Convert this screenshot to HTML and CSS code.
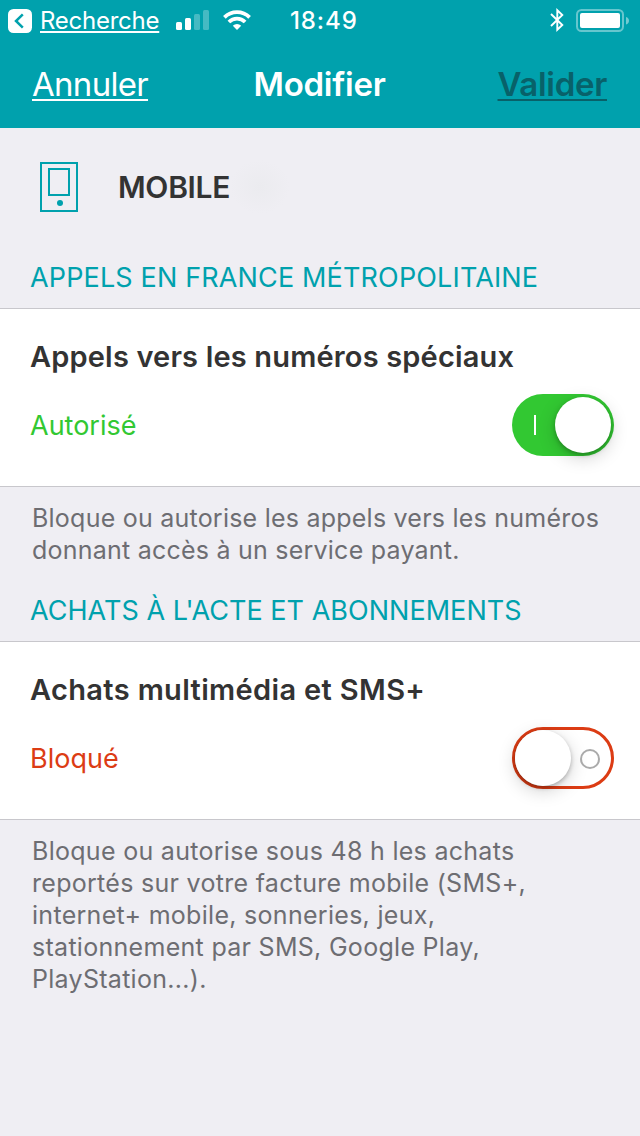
FILE: index.html
```html
<!DOCTYPE html>
<html lang="fr">
<head>
<meta charset="utf-8">
<title>Modifier</title>
<link rel="stylesheet" href="styles.css">
</head>
<body>
<header class="top">
  <div class="status">
    <svg class="back" width="24" height="24" viewBox="0 0 24 24"><rect width="24" height="24" rx="5.5" fill="#fff"/><path d="M14.8 5.3 8 12l6.8 6.7" fill="none" stroke="#00a1ad" stroke-width="2.5"/></svg>
    <span class="origin">Recherche</span>
    <svg class="signal" width="34" height="20" viewBox="0 0 34 20" fill="#fff"><rect y="12" width="6" height="8" rx="1.5"/><rect x="9" y="8" width="6" height="12" rx="1.5"/><rect x="18" y="4" width="6" height="16" rx="1.5" opacity=".27"/><rect x="27" width="6" height="20" rx="1.5" opacity=".27"/></svg>
    <svg class="wifi" width="28" height="20" viewBox="0 0 28 20" fill="none" stroke="#fff" stroke-width="3.8"><path d="M1.4 7.3a18 18 0 0 1 25.2 0M5.9 12a11.5 11.5 0 0 1 16.2 0"/><path d="M14 20l-4.2-4.3a6 6 0 0 1 8.4 0z" fill="#fff" stroke="none"/></svg>
    <span class="time">18:49</span>
    <svg class="bt" width="16" height="26" viewBox="0 0 16 26" fill="none" stroke="#fff" stroke-width="1.9"><path d="M2 7 13.3 18 8.3 22.8V3.2L13.3 8 2 19"/></svg>
    <svg class="battery" width="54" height="24" viewBox="0 0 54 24"><rect x="1" y="1" width="46" height="21" rx="4.5" fill="none" stroke="#fff" stroke-opacity=".4" stroke-width="2"/><rect x="4" y="4" width="40" height="15" rx="2" fill="#fff"/><path d="M50 8q3 1 3 3.8T50 15.5z" fill="#fff" opacity=".45"/></svg>
  </div>
  <nav class="nav"><span class="action">Annuler</span><strong>Modifier</strong><span class="action disabled">Valider</span></nav>
</header>
<main>
  <div class="line"><svg class="phone" width="38" height="50" viewBox="0 0 38 50" fill="none" stroke="#00a1ad" stroke-width="2"><rect x="1" y="1" width="36" height="48"/><rect x="9" y="7" width="20" height="26"/><circle cx="20" cy="41" r="3" fill="#00a1ad" stroke="none"/></svg><b>MOBILE</b><i class="redacted"></i></div>
  <h2>APPELS EN FRANCE MÉTROPOLITAINE</h2>
  <section class="card">
    <h3>Appels vers les numéros spéciaux</h3>
    <div class="setting on"><span>Autorisé</span><div class="switch"><i class="mark"></i><i class="knob"></i></div></div>
  </section>
  <p class="note">Bloque ou autorise les appels vers les numéros<br>donnant accès à un service payant.</p>
  <h2 class="purchases">ACHATS À L'ACTE ET ABONNEMENTS</h2>
  <section class="card purchases">
    <h3>Achats multimédia et SMS+</h3>
    <div class="setting off"><span>Bloqué</span><div class="switch"><i class="knob"></i><i class="mark"></i></div></div>
  </section>
  <p class="note purchases">Bloque ou autorise sous 48 h les achats<br>reportés sur votre facture mobile (SMS+,<br>internet+ mobile, sonneries, jeux,<br>stationnement par SMS, Google Play,<br>PlayStation...).</p>
</main>
</body>
</html>
```
FILE: styles.css
```css
* { box-sizing: border-box; }
body { margin: 0; background: #efeef3; font-family: Inter, sans-serif; color: #333; height: 1136px; overflow: hidden; }
.top { height: 128px; background: #00a1ad; color: #fff; }
.status { height: 40px; display: flex; align-items: center; padding-left: 8px; font-size: 24px; white-space: nowrap; }
.back, .battery { margin-top: 2px; }
.origin { width: 120px; margin-left: 8px; letter-spacing: -.25px; text-decoration: underline; text-decoration-thickness: 2px; text-underline-offset: 2px; }
.signal { margin-left: 16px; }
.wifi { margin-left: 13px; }
.time { width: 68px; margin-left: 39px; font-weight: 500; letter-spacing: .9px; }
.bt { margin-left: 191px; }
.battery { margin-left: 11px; }
.nav { height: 88px; display: grid; grid-template-columns: 1fr auto 1fr; align-items: center; padding: 0 33px 0 32px; font-size: 33px; }
.nav strong { font-weight: 600; letter-spacing: -.25px; }
.action { letter-spacing: -.7px; justify-self: start; text-decoration: underline; text-decoration-thickness: 2px; text-underline-offset: 3px; }
.disabled { justify-self: end; color: #086169; font-weight: 600; letter-spacing: -.3px; }
.line { height: 118px; display: flex; align-items: center; padding-left: 40px; font-size: 30px; }
.line b { margin-left: 40px; font-weight: 600; letter-spacing: -.3px; }
.redacted { width: 60px; height: 54px; background: radial-gradient(closest-side, #ebebef, #efeef3); }
h2 { margin: 2px 0 0; padding-left: 30px; height: 60px; line-height: 60px; color: #00a1ad; font-size: 27px; font-weight: 400; letter-spacing: .15px; }
h2.purchases { margin-top: 0; letter-spacing: .03px; }
.card { height: 179px; background: #fff; border-top: 1px solid #c8c7cc; border-bottom: 1px solid #c8c7cc; padding: 30px 26px 0 30px; }
h3 { margin: 0; font-size: 29px; line-height: 36px; font-weight: 600; letter-spacing: .17px; }
.purchases h3 { letter-spacing: .35px; }
.setting { margin-top: 19px; display: flex; justify-content: space-between; align-items: center; font-size: 27px; }
.on { color: #32c832; }
.off { color: #dc3c14; }
.switch { width: 102px; height: 62px; border-radius: 31px; display: flex; align-items: center; }
.on .switch { background: #32c832; padding: 0 3px 0 22px; justify-content: space-between; }
.off .switch { border: 3px solid #dc3c14; justify-content: space-between; padding-right: 11px; }
.knob { width: 56px; height: 56px; border-radius: 50%; background: #fff; box-shadow: 0 2px 4px rgba(0,0,0,.25), 0 5px 18px rgba(0,0,0,.18); }
.on .mark { width: 2px; height: 20px; background: #fff; }
.off .mark { width: 20px; height: 20px; margin-top: 2px; border: 2px solid #aaa; border-radius: 50%; }
.note { margin: 0; padding: 15px 32px; font-size: 25px; line-height: 32px; letter-spacing: .23px; color: #6d6d72; white-space: nowrap; }
.note.purchases { letter-spacing: .29px; }
```
